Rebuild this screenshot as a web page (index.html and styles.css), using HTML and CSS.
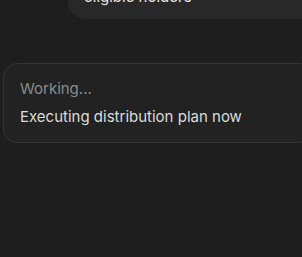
FILE: index.html
```html
<!DOCTYPE html>
<html>
<head>
<meta charset="utf-8">
<link rel="stylesheet" href="styles.css">
</head>
<body>
<div class="page">
  <div class="bubble">
    <p class="bubble-text">Distribute the tokens to all</p>
    <p class="bubble-text">eligible holders</p>
  </div>
  <div class="card">
    <div class="status">Working...</div>
    <div class="detail">Executing distribution plan now</div>
  </div>
</div>
</body>
</html>
```
FILE: styles.css
```css
html, body {
  margin: 0;
  padding: 0;
  background: #1e1e1e;
  overflow: hidden;
}
.page {
  width: 302px;
  height: 257px;
  font-family: Inter, "Noto Sans", sans-serif;
  font-size: 15px;
  overflow: hidden;
}
.bubble {
  margin-left: 68px;
  width: 260px;
  margin-top: -43px;
  background: #282828;
  border-radius: 0 0 0 18px;
  padding: 10px 16px 12px;
  box-sizing: border-box;
}
.bubble-text {
  margin: 0;
  line-height: 20px;
  color: #e6e6e6;
}
.card {
  margin-top: 44px;
  margin-left: 3px;
  width: 310px;
  box-sizing: border-box;
  background: #222222;
  border: 1px solid #353535;
  border-radius: 14px;
  padding: 15px 16px 15px;
  display: flex;
  flex-direction: column;
  gap: 8px;
}
.status {
  line-height: 20px;
  color: #8c8c8c;
}
.detail {
  line-height: 20px;
  color: #dcdcdc;
}
```
